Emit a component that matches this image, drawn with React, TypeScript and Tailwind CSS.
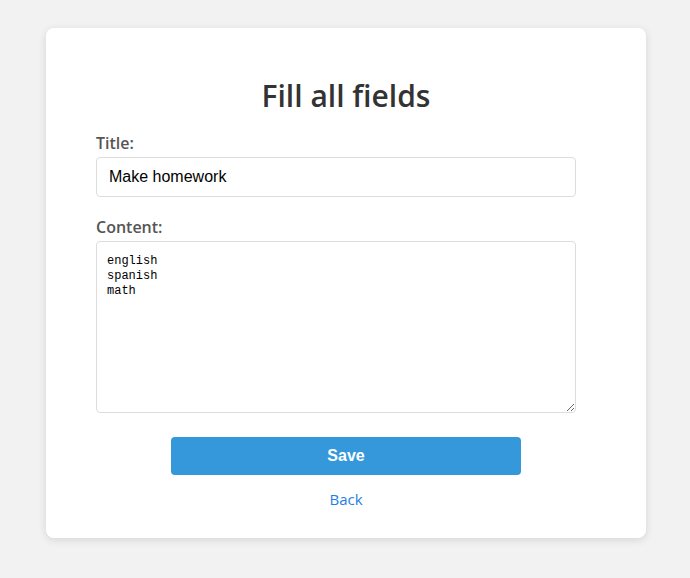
export default function App() {
  return (
    <div className="min-h-[578px] bg-[#f2f2f2] pt-[28px] pb-10 font-['Open_Sans',sans-serif]">
      <div className="ml-[46px] flex h-[510px] w-[600px] flex-col rounded-lg bg-white px-[50px] pt-[50px] shadow-[0_2px_8px_rgba(0,0,0,0.12)]">
        <h1 className="text-center text-[30px] font-semibold leading-9 text-[#333]">
          Fill all fields
        </h1>

        <label className="mt-[20px] text-base font-semibold leading-[18px] text-[#555]">
          Title:
        </label>
        <input
          defaultValue="Make homework"
          className="mt-[5px] h-10 w-[480px] rounded border border-[#ddd] px-3 font-['Liberation_Sans',Arial,sans-serif] text-base text-black outline-none"
        />

        <label className="mt-[21px] text-base font-semibold leading-[18px] text-[#555]">
          Content:
        </label>
        <textarea
          defaultValue={"english\nspanish\nmath"}
          className="mt-[5px] h-[172px] w-[480px] rounded border border-[#ddd] px-[10px] pt-[12px] pb-[10px] font-['Liberation_Mono',monospace] text-[12px] leading-[15px] text-black outline-none"
        />

        <button className="mx-auto mt-6 h-[38px] w-[350px] rounded bg-[#3498db] font-['Liberation_Sans',Arial,sans-serif] text-base font-bold text-white">
          Save
        </button>

        <a href="#" className="mt-[14px] text-center text-[15px] leading-5 text-[#1e80e6]">
          Back
        </a>
      </div>
    </div>
  );
}
